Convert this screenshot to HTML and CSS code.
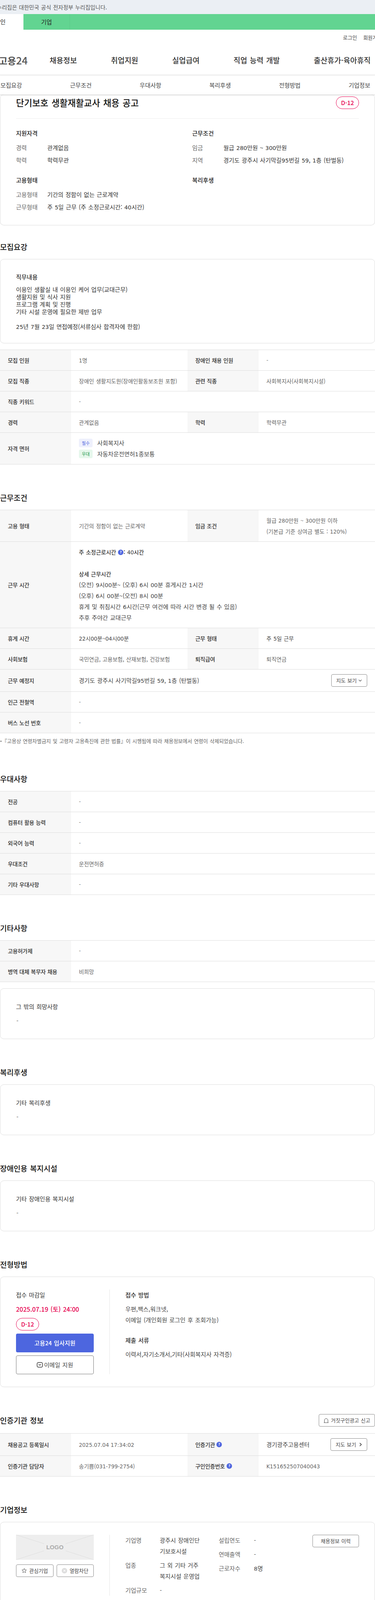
FILE: index.html
```html
<!DOCTYPE html>
<html lang="ko">
<head>
<meta charset="utf-8">
<title>단기보호 생활재활교사 채용 공고</title>
<link rel="stylesheet" href="styles.css">
</head>
<body>
<div class="gov-banner"><p class="gov-text">누리집은 대한민국 공식 전자정부 누리집입니다.</p></div>
<div class="audience">
  <span class="aud-tab aud-active">개인</span>
  <span class="aud-tab aud-biz">기업</span>
</div>
<div class="util"><span>로그인</span><span class="util-join">회원가입</span></div>
<header class="gnb">
  <span class="logo">고용<span class="logo-num">24</span></span>
  <nav class="gnb-menu">
    <a class="gnb-item">채용정보</a>
    <a class="gnb-item">취업지원</a>
    <a class="gnb-item">실업급여</a>
    <a class="gnb-item">직업 능력 개발</a>
    <a class="gnb-item">출산휴가·육아휴직</a>
  </nav>
</header>
<nav class="tabs">
  <a class="tab">모집요강</a><a class="tab">근무조건</a><a class="tab">우대사항</a><a class="tab">복리후생</a><a class="tab">전형방법</a><a class="tab">기업정보</a>
</nav>

<main class="main">
  <section class="card summary">
    <div class="sum-head">
      <h1 class="job-title">단기보호 생활재활교사 채용 공고</h1>
      <span class="dday">D-12</span>
    </div>
    <div class="sum-grid">
      <div class="sum-block">
        <h3 class="sum-h">지원자격</h3>
        <dl class="sum-list">
          <div class="sum-row"><dt>경력</dt><dd>관계없음</dd></div>
          <div class="sum-row"><dt>학력</dt><dd>학력무관</dd></div>
        </dl>
      </div>
      <div class="sum-block">
        <h3 class="sum-h">근무조건</h3>
        <dl class="sum-list">
          <div class="sum-row"><dt>임금</dt><dd>월급 <span class="n">280</span>만원 ~ <span class="n">300</span>만원</dd></div>
          <div class="sum-row"><dt>지역</dt><dd>경기도 광주시 사기막길<span class="n">95</span>번길 <span class="n">59</span>, <span class="n">1</span>층 (탄벌동)</dd></div>
        </dl>
      </div>
      <div class="sum-block">
        <h3 class="sum-h">고용형태</h3>
        <dl class="sum-list">
          <div class="sum-row"><dt>고용형태</dt><dd>기간의 정함이 없는 근로계약</dd></div>
          <div class="sum-row"><dt>근무형태</dt><dd>주 <span class="n">5</span>일 근무 (주 소정근로시간: <span class="n">40</span>시간)</dd></div>
        </dl>
      </div>
      <div class="sum-block">
        <h3 class="sum-h">복리후생</h3>
      </div>
    </div>
  </section>

  <h2 class="sec-title first">모집요강</h2>
  <section class="card duty">
    <h3 class="duty-h">직무내용</h3>
    <p class="duty-text">이용인 생활실 내 이용인 케어 업무(교대근무)<br>생활지원 및 식사 지원<br>프로그램 계획 및 진행<br>기타 시설 운영에 필요한 제반 업무<br><br><span class="n">25</span>년 <span class="n">7</span>월 <span class="n">23</span>일 면접예정(서류심사 합격자에 한함)</p>
  </section>
  <div class="table tbl-after-card">
    <div class="tr">
      <div class="th">모집 인원</div><div class="td"><span class="n">1</span>명</div>
      <div class="th">장애인 채용 인원</div><div class="td">-</div>
    </div>
    <div class="tr">
      <div class="th">모집 직종</div><div class="td">장애인 생활지도원(장애인활동보조원 포함)</div>
      <div class="th">관련 직종</div><div class="td">사회복지사(사회복지시설)</div>
    </div>
    <div class="tr">
      <div class="th">직종 키워드</div><div class="td span3">-</div>
    </div>
    <div class="tr">
      <div class="th">경력</div><div class="td">관계없음</div>
      <div class="th">학력</div><div class="td">학력무관</div>
    </div>
    <div class="tr">
      <div class="th">자격 면허</div>
      <div class="td span3 big">
        <div class="lic-row"><span class="chip chip-req">필수</span>사회복지사</div>
        <div class="lic-row"><span class="chip chip-pref">우대</span><span>자동차운전면허<span class="n">1</span>종보통</span></div>
      </div>
    </div>
  </div>

  <h2 class="sec-title">근무조건</h2>
  <div class="table">
    <div class="tr">
      <div class="th">고용 형태</div><div class="td">기간의 정함이 없는 근로계약</div>
      <div class="th">임금 조건</div><div class="td">월급 <span class="n">280</span>만원 ~ <span class="n">300</span>만원 이하<br>(기본급 기준 상여금 별도 : <span class="n">120%</span>)</div>
    </div>
    <div class="tr">
      <div class="th">근무 시간</div>
      <div class="td span3 big">
        <span class="strong">주 소정근로시간 <svg class="qmark" viewBox="0 0 14 14"><circle cx="7" cy="7" r="7"/><text x="7" y="10" text-anchor="middle">?</text></svg>: <span class="n">40</span>시간</span><br><br>
        <span class="strong">상세 근무시간</span><br>
        (오전) <span class="n">9</span>시<span class="n">00</span>분~ (오후) <span class="n">6</span>시 <span class="n">00</span>분 휴게시간 <span class="n">1</span>시간<br>
        (오후) <span class="n">6</span>시 <span class="n">00</span>분~(오전) <span class="n">8</span>시 <span class="n">00</span>분<br>
        휴게 및 취침시간 <span class="n">6</span>시간(근무 여건에 따라 시간 변경 될 수 있음)<br>
        추후 주야간 교대근무
      </div>
    </div>
    <div class="tr">
      <div class="th">휴게 시간</div><div class="td dark"><span class="n">22</span>시<span class="n">00</span>분~<span class="n">04</span>시<span class="n">00</span>분</div>
      <div class="th">근무 형태</div><div class="td dark">주 <span class="n">5</span>일 근무</div>
    </div>
    <div class="tr">
      <div class="th">사회보험</div><div class="td">국민연금, 고용보험, 산재보험, 건강보험</div>
      <div class="th">퇴직급여</div><div class="td">퇴직연금</div>
    </div>
    <div class="tr">
      <div class="th">근무 예정지</div>
      <div class="td span3 td-btn big">
        <span>경기도 광주시 사기막길<span class="n">95</span>번길 <span class="n">59</span>, <span class="n">1</span>층 (탄벌동)</span>
        <a class="btn btn-map">지도 보기 <svg class="chev" viewBox="0 0 10 10"><path d="M1.500 3.200 5 6.800l3.500-3.600"/></svg></a>
      </div>
    </div>
    <div class="tr">
      <div class="th">인근 전철역</div><div class="td span3">-</div>
    </div>
    <div class="tr">
      <div class="th">버스 노선 번호</div><div class="td span3">-</div>
    </div>
  </div>
  <p class="note">『고용상 연령차별금지 및 고령자 고용촉진에 관한 법률』이 시행됨에 따라 채용정보에서 연령이 삭제되었습니다.</p>

  <h2 class="sec-title">우대사항</h2>
  <div class="table">
    <div class="tr"><div class="th">전공</div><div class="td span3">-</div></div>
    <div class="tr"><div class="th">컴퓨터 활용 능력</div><div class="td span3">-</div></div>
    <div class="tr"><div class="th">외국어 능력</div><div class="td span3">-</div></div>
    <div class="tr"><div class="th">우대조건</div><div class="td span3">운전면허증</div></div>
    <div class="tr"><div class="th">기타 우대사항</div><div class="td span3">-</div></div>
  </div>

  <h2 class="sec-title">기타사항</h2>
  <div class="table">
    <div class="tr"><div class="th">고용허가제</div><div class="td span3">-</div></div>
    <div class="tr"><div class="th">병역 대체 복무자 채용</div><div class="td span3">비희망</div></div>
  </div>
  <section class="card simple tbl-after">
    <h3 class="simple-h">그 밖의 희망사항</h3>
    <p class="simple-v">-</p>
  </section>

  <h2 class="sec-title">복리후생</h2>
  <section class="card simple">
    <h3 class="simple-h">기타 복리후생</h3>
    <p class="simple-v">-</p>
  </section>

  <h2 class="sec-title">장애인용 복지시설</h2>
  <section class="card simple">
    <h3 class="simple-h">기타 장애인용 복지시설</h3>
    <p class="simple-v">-</p>
  </section>

  <h2 class="sec-title">전형방법</h2>
  <section class="card split">
    <div class="split-left">
      <h3 class="simple-h">접수 마감일</h3>
      <p class="deadline">2025.07.19 (토) 24:00</p>
      <span class="dday dday-block">D-12</span>
      <a class="apply">고용24 입사지원</a>
      <a class="apply-mail"><svg class="mail-ico" viewBox="0 0 16 14"><rect x="1" y="1" width="14" height="12" rx="3.500"/><path d="M5 5.500 8 8l3-2.500"/></svg>이메일 지원</a>
    </div>
    <div class="split-right">
      <h3 class="simple-h strong-h">접수 방법</h3>
      <p class="method">우편,팩스,워크넷,<br>이메일 (개인회원 로그인 후 조회가능)</p>
      <h3 class="simple-h strong-h docs-h">제출 서류</h3>
      <p class="method">이력서,자기소개서,기타(사회복지사 자격증)</p>
    </div>
  </section>

  <div class="title-row">
    <h2 class="sec-title inline">인증기관 정보</h2>
    <a class="btn btn-report"><svg class="bell" viewBox="0 0 14 13"><path d="M2.500 12V6a4.500 4.500 0 0 1 9 0v6M1 12h12"/></svg>거짓구인광고 신고</a>
  </div>
  <div class="table">
    <div class="tr">
      <div class="th">채용공고 등록일시</div><div class="td"><span class="n">2025.07.04 17:34:02</span></div>
      <div class="th">인증기관 <svg class="qmark" viewBox="0 0 14 14"><circle cx="7" cy="7" r="7"/><text x="7" y="10" text-anchor="middle">?</text></svg></div>
      <div class="td td-btn big">
        <span>경기광주고용센터</span>
        <a class="btn btn-map2">지도 보기 <svg class="chev-r" viewBox="0 0 8 12"><path d="M2 2l4 4-4 4"/></svg></a>
      </div>
    </div>
    <div class="tr">
      <div class="th">인증기관 담당자</div><div class="td">송기쁨(<span class="n">031-799-2754</span>)</div>
      <div class="th">구인인증번호 <svg class="qmark" viewBox="0 0 14 14"><circle cx="7" cy="7" r="7"/><text x="7" y="10" text-anchor="middle">?</text></svg></div>
      <div class="td"><span class="n">K151652507040043</span></div>
    </div>
  </div>

  <h2 class="sec-title">기업정보</h2>
  <section class="card split company">
    <div class="split-left">
      <div class="logo-box">
        <svg class="logo-lines" viewBox="0 0 199 64"><path d="M0 0 72 23M199 0l-72 23M0 64l72-23M199 64l-72-23"/></svg>
        <span class="logo-text">LOGO</span>
      </div>
      <div class="co-btns">
        <a class="btn btn-co"><svg class="star" viewBox="0 0 14 14"><path d="M7 1.200 8.700 5h4.100l-3.200 2.800 1.100 4.300L7 9.800l-3.700 2.300 1.100-4.300L1.200 5h4.100z"/></svg>관심기업</a>
        <a class="btn btn-co"><svg class="xcirc" viewBox="0 0 14 14"><circle cx="7" cy="7" r="7"/><path d="M4.500 4.500l5 5m0-5-5 5"/></svg>열람차단</a>
      </div>
    </div>
    <div class="split-right co-right">
      <dl class="co-col co-col1">
        <dt>기업명</dt><dd>광주시 장애인단<br>기보호시설</dd>
        <dt>업종</dt><dd>그 외 기타 거주<br>복지시설 운영업</dd>
        <dt>기업규모</dt><dd>-</dd>
      </dl>
      <dl class="co-col co-col2">
        <dt>설립연도</dt><dd>-</dd>
        <dt>연매출액</dt><dd>-</dd>
        <dt>근로자수</dt><dd><span class="n">8</span>명</dd>
      </dl>
      <a class="btn btn-history">채용정보 이력</a>
    </div>
  </section>
</main>
</body>
</html>
```
FILE: styles.css
```css
* {
  box-sizing: border-box;
  word-spacing: 0.08em;
}
html, body { margin: 0; padding: 0; }
body {
  width: 960px;
  overflow-x: hidden;
  background: #fff;
  color: #222;
  font-family: "Noto Sans CJK KR", "Noto Sans", sans-serif;
  font-size: 15px;
  line-height: 28px;
}
h1, h2, h3, p, dl, dd, dt { margin: 0; padding: 0; font-weight: 400; }
a { color: inherit; text-decoration: none; }

.n {
  font-family: "DejaVu Sans", "Noto Sans CJK KR", sans-serif;
  font-size: 0.96em;
  font-weight: 400;
  line-height: 1;
  word-spacing: 0;
}

.gov-banner { height: 36px; background: #ebeff4; overflow: hidden; }
.gov-text { margin-left: -8px; font-size: 14px; line-height: 36px; color: #555; white-space: nowrap; }

.audience { display: flex; height: 40px; background: #62d491; overflow: hidden; }
.aud-tab { flex: none; width: 119px; font-size: 15px; line-height: 40px; text-align: center; }
.aud-active { margin-left: -59px; background: #fff; }
.aud-biz { border-right: 1px solid #5bc888; }

.util { display: flex; height: 40px; padding-left: 878px; font-size: 13px; line-height: 40px; color: #444; white-space: nowrap; overflow: hidden; }
.util-join { margin-left: 16px; }

.gnb { display: flex; height: 77px; overflow: hidden; border-bottom: 2px solid #eee; }
.logo { flex: none; width: 130px; margin-left: -3px; font-size: 24px; font-weight: 700; line-height: 75px; color: #555; white-space: nowrap; }
.logo-num { font-size: 26px; font-weight: 500; }
.gnb-menu { display: flex; flex: none; gap: 87px; }
.gnb-item { font-size: 19px; font-weight: 500; line-height: 75px; color: #333; white-space: nowrap; }

.tabs {
  position: relative;
  z-index: 2;
  display: flex;
  height: 49px;
  padding-left: 1px;
  background: #fff;
  box-shadow: 0 1px 3px rgba(0, 0, 0, 0.25);
}
.tab { flex: 0 0 178.300px; font-size: 15px; line-height: 49px; color: #444; white-space: nowrap; }

.card { border: 1px solid #ddd; border-radius: 10px; background: #fff; }

.summary { padding: 0 40px 28px; border-top: 0; }
.sum-head { display: flex; justify-content: space-between; align-items: flex-start; height: 62px; padding-top: 5px; border-bottom: 1px solid #eee; }
.job-title { margin-top: -1px; font-size: 22.500px; font-weight: 500; line-height: 32px; color: #111; }
.dday {
  flex: none;
  display: inline-block;
  width: 59px;
  height: 32px;
  border: 1px solid #e6004f;
  border-radius: 16px;
  color: #e6004f;
  font-size: 15px;
  font-weight: 500;
  line-height: 30px;
  text-align: center;
}
.sum-grid { display: grid; grid-template-columns: 451px 1fr; grid-template-rows: 120px auto; padding-top: 23px; }
.sum-h { font-size: 15px; font-weight: 500; line-height: 28px; color: #222; }
.sum-list { margin-top: 9px; }
.sum-row { display: flex; height: 32px; color: #333; }
.sum-row dt { flex: none; width: 80px; color: #666; white-space: nowrap; }
.sum-row dd { white-space: nowrap; }

.sec-title { height: 42px; margin-top: 64px; margin-bottom: 10px; font-size: 19px; font-weight: 500; line-height: 42px; color: #111; }
.sec-title.first { margin-top: 34px; }
.sec-title.inline { margin: 0; }
.title-row { display: flex; justify-content: space-between; align-items: center; height: 42px; margin-top: 64px; margin-bottom: 12px; }

.duty { height: 216px; padding: 31px 40px 0; }
.duty-h { font-size: 15px; font-weight: 500; line-height: 28px; color: #333; margin-bottom: 8px; }
.duty-text { font-size: 15px; line-height: 19px; color: #333; }

.table { border-top: 1px solid #ddd; }
.tbl-after-card { margin-top: 16px; }
.tr { display: flex; border-bottom: 1px solid #ddd; }
.th {
  flex: 0 0 182px;
  display: flex;
  align-items: center;
  gap: 4px;
  padding: 12px 20px;
  background: #f7f7f7;
  font-size: 14px;
  font-weight: 500;
  line-height: 28px;
  letter-spacing: -0.02em;
  word-spacing: 0.05em;
  color: #333;
  white-space: nowrap;
}
.td { flex: 0 0 298px; align-self: center; padding: 12px 20px; font-size: 14px; line-height: 28px; color: #666; white-space: nowrap; }
.td.span3 { flex: 1 1 auto; }
.td.big { font-size: 15px; color: #444; }
.td.dark { color: #444; }
.strong { font-size: 14px; font-weight: 500; line-height: 1; color: #333; }
.td-btn { display: flex; align-items: center; justify-content: space-between; }
.lic-row { display: flex; align-items: center; height: 28px; color: #444; }
.chip { flex: none; width: 35px; height: 22px; margin-right: 12px; border-radius: 4px; font-size: 11px; line-height: 22px; text-align: center; }
.chip-req { background: #eef0fc; color: #5468e0; }
.chip-pref { background: #e6f7ec; color: #1e9a4e; }

.qmark { display: inline-block; flex: none; width: 14px; height: 14px; vertical-align: -2px; fill: #4f67e0; }
.qmark text { fill: #fff; font-size: 9px; font-weight: 700; }

.btn { display: inline-flex; align-items: center; justify-content: center; height: 32px; border: 1px solid #888; border-radius: 4px; background: #fff; font-size: 13px; font-weight: 400; color: #444; white-space: nowrap; line-height: 30px; }
.btn-map { flex: none; width: 92px; gap: 4px; }
.btn-map2 { flex: none; width: 94px; gap: 7px; }
.chev { width: 10px; height: 10px; fill: none; stroke: #444; stroke-width: 1.200; }
.chev-r { width: 8px; height: 12px; fill: none; stroke: #333; stroke-width: 1.600; }
.btn-report { flex: none; width: 144px; gap: 5px; }
.bell { width: 14px; height: 13px; fill: none; stroke: #444; stroke-width: 1; }

.note { position: relative; margin-top: 9px; padding: 0 0 1px 5px; font-size: 13px; line-height: 22px; color: #666; white-space: nowrap; }
.note::before { content: ""; position: absolute; left: 1px; top: 10px; width: 3px; height: 3px; border-radius: 50%; background: #666; }

.simple { padding: 32px 40px; }
.tbl-after { margin-top: 16px; }
.simple-h { font-size: 15px; font-weight: 400; line-height: 28px; color: #333; }
.simple-v { margin-top: 8px; line-height: 28px; color: #555; padding-left: 1px; }

.split { display: flex; padding: 32px 40px; }
.split-left { flex: 0 0 240px; padding-right: 40px; border-right: 1px solid #e5e5e5; }
.split-right { flex: 1 1 auto; padding-left: 40px; }
.deadline { margin-top: 8px; font-size: 16px; font-weight: 500; line-height: 28px; color: #e6004f; white-space: nowrap; }
.dday-block { display: block; margin-top: 9px; }
.apply { display: block; height: 48px; margin-top: 8px; border-radius: 4px; background: #4d66df; color: #fff; font-size: 15px; font-weight: 500; line-height: 48px; text-align: center; }
.apply-mail { display: flex; align-items: center; justify-content: center; gap: 3px; height: 48px; margin-top: 8px; border: 1px solid #777; border-radius: 4px; font-size: 15px; color: #444; }
.mail-ico { width: 16px; height: 14px; fill: none; stroke: #333; stroke-width: 1.500; }

.strong-h { font-weight: 500; }
.method { margin-top: 8px; color: #444; white-space: nowrap; }
.docs-h { margin-top: 24px; }

.company .split-left { height: 156px; }
.logo-box { position: relative; display: flex; align-items: center; justify-content: center; width: 199px; height: 64px; background: #eee; }
.logo-lines { position: absolute; inset: 0; width: 100%; height: 100%; fill: none; stroke: #ddd; stroke-width: 1; }
.logo-text { position: relative; font-family: "Liberation Sans", sans-serif; font-size: 15px; font-weight: 700; color: #aaa; }
.co-btns { display: flex; gap: 8px; margin-top: 12px; }
.btn-co { flex: 1 1 0; gap: 6px; }
.star { width: 14px; height: 14px; fill: none; stroke: #555; stroke-width: 1; }
.xcirc { width: 14px; height: 14px; }
.xcirc circle { fill: #ddd; }
.xcirc path { fill: none; stroke: #fff; stroke-width: 1.200; }

.co-right { display: flex; align-items: flex-start; }
.co-col { display: grid; grid-template-columns: 88px 1fr; row-gap: 8px; color: #555; white-space: nowrap; }
.co-col1 { flex: 0 0 239px; }
.co-col2 { flex: 0 0 240px; grid-template-columns: 90px 1fr; }
.co-col dt { color: #666; }
.co-col dd { color: #444; }
.btn-history { flex: none; width: 119px; }
```
